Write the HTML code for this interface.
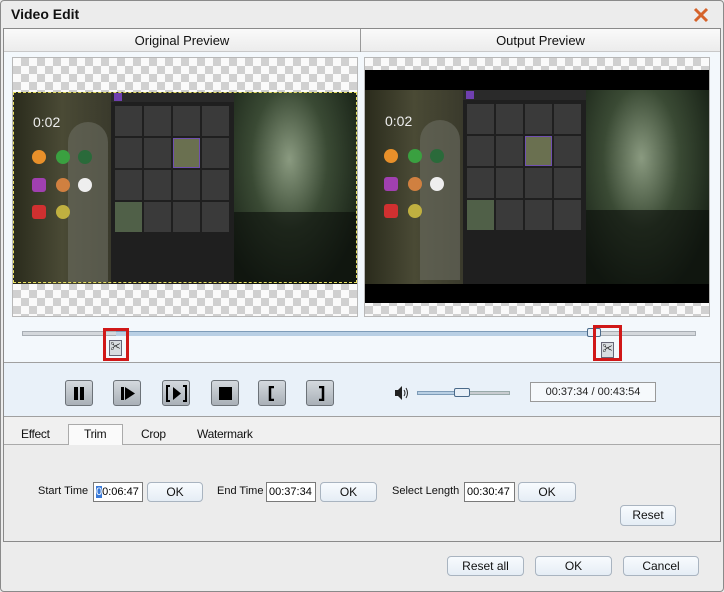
<!DOCTYPE html><html><head><style>
*{box-sizing:border-box;margin:0;padding:0}
body{width:724px;height:592px;position:relative;background:#ececec;font-family:"Liberation Sans","Noto Sans CJK SC",sans-serif;overflow:hidden}
.a{position:absolute}
.chk{background-color:#fafafa;background-image:linear-gradient(45deg,#d0d0d0 25%,transparent 25%,transparent 75%,#d0d0d0 75%),linear-gradient(45deg,#d0d0d0 25%,transparent 25%,transparent 75%,#d0d0d0 75%);background-size:16px 16px;background-position:0 0,8px 8px;border:1px solid #b8b8b8}
.vid{position:absolute;width:344px;height:192px;overflow:hidden;background:#1e1e1e}
.btn{position:absolute;width:28px;height:26px;border:1px solid #6c7278;border-radius:3px;background:linear-gradient(#d4d9de,#a9b0b7)}
.pb{position:absolute;height:20px;border:1px solid #a9b4c0;border-radius:4px;background:linear-gradient(#f8fbfe,#e5edf5);font-size:12px;text-align:center;line-height:18px;color:#111}
.tb{position:absolute;height:20px;border:1px solid #7a7a7a;background:#fff;font-size:11px;line-height:18px;padding-left:2px}
.lbl{position:absolute;font-size:11px;color:#111}
.tab{position:absolute;font-size:12px;color:#111;letter-spacing:-0.3px}
.cell{position:absolute;width:27px;height:30px;background:#3a3a3a}
.ic{position:absolute;width:14px;height:14px;border-radius:50%}
</style></head><body>
<div class="a" style="left:11px;top:6px;font-size:14px;font-weight:bold;color:#111">Video Edit</div>
<svg class="a" style="left:693px;top:7px" width="16" height="16"><path d="M2 2L14 14M14 2L2 14" stroke="#d5622a" stroke-width="3"/></svg>
<div class="a" style="left:3px;top:28px;width:718px;height:514px;border:1px solid #8a8a8a;background:#f3f8fc"></div>
<div class="a" style="left:4px;top:29px;width:716px;height:23px;background:linear-gradient(#fafafa,#ececec);border-bottom:1px solid #c8c8c8"></div>
<div class="a" style="left:360px;top:29px;width:1px;height:23px;background:#999"></div>
<div class="a" style="left:4px;top:33px;width:356px;text-align:center;font-size:13px;color:#111">Original Preview</div>
<div class="a" style="left:361px;top:33px;width:359px;text-align:center;font-size:13px;color:#111">Output Preview</div>
<div class="a chk" style="left:12px;top:57px;width:346px;height:260px"></div>
<div class="a chk" style="left:364px;top:57px;width:346px;height:260px"></div>
<div class="a" style="left:365px;top:70px;width:344px;height:233px;background:#000"></div>

<div class="vid" style="left:13px;top:92px">
 <div class="a" style="left:0;top:0;width:98px;height:192px;background:linear-gradient(90deg,#2a2b1c,#4a4a35 50%,#3a3a2c)"></div>
 <div class="a" style="left:55px;top:30px;width:40px;height:160px;background:#6a6c60;border-radius:20px 20px 0 0;opacity:.6"></div>
 <div class="a" style="left:20px;top:22px;color:#eee;font-size:14px">0:02</div>
 <div class="ic" style="left:19px;top:58px;background:#e8902a"></div><div class="ic" style="left:43px;top:58px;background:#3aa040"></div><div class="ic" style="left:65px;top:58px;background:#2a6a3a"></div>
 <div class="ic" style="left:19px;top:86px;background:#a040b0;border-radius:3px"></div><div class="ic" style="left:43px;top:86px;background:#d08040"></div><div class="ic" style="left:65px;top:86px;background:#eee"></div>
 <div class="ic" style="left:19px;top:113px;background:#d03030;border-radius:3px"></div><div class="ic" style="left:43px;top:113px;background:#c0b040"></div>
 <div class="a" style="left:98px;top:0;width:123px;height:192px;background:#1f1f1f"></div>
 <div class="a" style="left:98px;top:0;width:123px;height:10px;background:#2a2a2a"></div>
 <div class="a" style="left:101px;top:1px;width:8px;height:8px;background:#7040b0"></div>
 <div class="cell" style="left:102px;top:14px"></div><div class="cell" style="left:131px;top:14px"></div><div class="cell" style="left:160px;top:14px"></div><div class="cell" style="left:189px;top:14px"></div>
 <div class="cell" style="left:102px;top:46px"></div><div class="cell" style="left:131px;top:46px"></div><div class="cell" style="left:160px;top:46px;background:#6a7050;border:1px solid #7050b0"></div><div class="cell" style="left:189px;top:46px"></div>
 <div class="cell" style="left:102px;top:78px"></div><div class="cell" style="left:131px;top:78px"></div><div class="cell" style="left:160px;top:78px"></div><div class="cell" style="left:189px;top:78px"></div>
 <div class="cell" style="left:102px;top:110px;background:#506048"></div><div class="cell" style="left:131px;top:110px"></div><div class="cell" style="left:160px;top:110px"></div><div class="cell" style="left:189px;top:110px"></div>
 <div class="a" style="left:221px;top:0;width:123px;height:192px;background:radial-gradient(ellipse at 45% 35%,#8a9a80,#3a4a34 40%,#1a2418 80%)"></div>
 <div class="a" style="left:221px;top:120px;width:123px;height:72px;background:rgba(10,14,10,.6)"></div>
</div>
<div class="a" style="left:13px;top:92px;width:344px;height:191px;border:1px dashed #e8e060"></div>

<div class="vid" style="left:365px;top:90px;height:194px">
 <div class="a" style="left:0;top:0;width:98px;height:194px;background:linear-gradient(90deg,#2a2b1c,#4a4a35 50%,#3a3a2c)"></div>
 <div class="a" style="left:55px;top:30px;width:40px;height:160px;background:#6a6c60;border-radius:20px 20px 0 0;opacity:.6"></div>
 <div class="a" style="left:20px;top:23px;color:#eee;font-size:14px">0:02</div>
 <div class="ic" style="left:19px;top:59px;background:#e8902a"></div><div class="ic" style="left:43px;top:59px;background:#3aa040"></div><div class="ic" style="left:65px;top:59px;background:#2a6a3a"></div>
 <div class="ic" style="left:19px;top:87px;background:#a040b0;border-radius:3px"></div><div class="ic" style="left:43px;top:87px;background:#d08040"></div><div class="ic" style="left:65px;top:87px;background:#eee"></div>
 <div class="ic" style="left:19px;top:114px;background:#d03030;border-radius:3px"></div><div class="ic" style="left:43px;top:114px;background:#c0b040"></div>
 <div class="a" style="left:98px;top:0;width:123px;height:194px;background:#1f1f1f"></div>
 <div class="a" style="left:98px;top:0;width:123px;height:10px;background:#2a2a2a"></div>
 <div class="a" style="left:101px;top:1px;width:8px;height:8px;background:#7040b0"></div>
 <div class="cell" style="left:102px;top:14px"></div><div class="cell" style="left:131px;top:14px"></div><div class="cell" style="left:160px;top:14px"></div><div class="cell" style="left:189px;top:14px"></div>
 <div class="cell" style="left:102px;top:46px"></div><div class="cell" style="left:131px;top:46px"></div><div class="cell" style="left:160px;top:46px;background:#6a7050;border:1px solid #7050b0"></div><div class="cell" style="left:189px;top:46px"></div>
 <div class="cell" style="left:102px;top:78px"></div><div class="cell" style="left:131px;top:78px"></div><div class="cell" style="left:160px;top:78px"></div><div class="cell" style="left:189px;top:78px"></div>
 <div class="cell" style="left:102px;top:110px;background:#506048"></div><div class="cell" style="left:131px;top:110px"></div><div class="cell" style="left:160px;top:110px"></div><div class="cell" style="left:189px;top:110px"></div>
 <div class="a" style="left:221px;top:0;width:123px;height:194px;background:radial-gradient(ellipse at 45% 35%,#8a9a80,#3a4a34 40%,#1a2418 80%)"></div>
 <div class="a" style="left:221px;top:120px;width:123px;height:74px;background:rgba(10,14,10,.6)"></div>
</div>

<div class="a" style="left:22px;top:331px;width:674px;height:5px;background:#d4d8dc;border:1px solid #a8aeb4"></div>
<div class="a" style="left:116px;top:331px;width:478px;height:5px;background:#b8cfe4;border-top:1px solid #7e9cb8"></div>
<div class="a" style="left:587px;top:328px;width:14px;height:9px;border:1px solid #4a6a8a;border-radius:2px;background:#e8f0f8"></div>
<div class="a" style="left:103px;top:328px;width:26px;height:33px;border:3px solid #d01818"></div>
<div class="a" style="left:109px;top:340px;width:13px;height:16px;border:1px solid #667;background:#d8dce0;font-size:10px;line-height:14px;text-align:center">✂</div>
<div class="a" style="left:593px;top:325px;width:29px;height:36px;border:3px solid #d01818"></div>
<div class="a" style="left:601px;top:342px;width:13px;height:16px;border:1px solid #667;background:#d8dce0;font-size:10px;line-height:14px;text-align:center">✂</div>
<div class="a" style="left:4px;top:362px;width:716px;height:1px;background:#a0a0a0"></div>
<div class="a" style="left:4px;top:363px;width:716px;height:53px;background:#e9f1f9"></div>

<div class="btn" style="left:65px;top:380px"><div class="a" style="left:8px;top:6px;width:4px;height:13px;background:#000"></div><div class="a" style="left:14px;top:6px;width:4px;height:13px;background:#000"></div></div>
<div class="btn" style="left:113px;top:380px"><div class="a" style="left:7px;top:6px;width:3px;height:13px;background:#000"></div><svg class="a" style="left:11px;top:6px" width="10" height="13"><path d="M0 0L10 6.5L0 13Z"/></svg></div>
<div class="btn" style="left:162px;top:380px"><svg class="a" style="left:3px;top:4px" width="21" height="17"><path d="M4 1H1V16H4M17 1H20V16H17" stroke="#000" stroke-width="2" fill="none"/><path d="M7 2L15 8.5L7 15Z"/></svg></div>
<div class="btn" style="left:211px;top:380px"><div class="a" style="left:7px;top:6px;width:13px;height:13px;background:#000"></div></div>
<div class="btn" style="left:258px;top:380px"><svg class="a" style="left:9px;top:5px" width="8" height="15"><path d="M6 1H2V14H6" stroke="#000" stroke-width="2.5" fill="none"/></svg></div>
<div class="btn" style="left:306px;top:380px"><svg class="a" style="left:11px;top:5px" width="8" height="15"><path d="M1 1H5V14H1" stroke="#000" stroke-width="2.5" fill="none"/></svg></div>

<svg class="a" style="left:395px;top:386px" width="14" height="14"><path d="M0 4H3L7 0V14L3 10H0Z" fill="#222"/><path d="M9 4Q11 7 9 10M11 2Q14 7 11 12" stroke="#222" fill="none"/></svg>
<div class="a" style="left:417px;top:391px;width:93px;height:4px;background:#c8ccd0;border:1px solid #9aa"></div>
<div class="a" style="left:417px;top:391px;width:40px;height:4px;background:#b8cfe4;border:1px solid #7e9cb8"></div>
<div class="a" style="left:454px;top:388px;width:16px;height:9px;border:1px solid #4a6a8a;border-radius:2px;background:#e8f0f8"></div>
<div class="a" style="left:530px;top:382px;width:126px;height:20px;border:1px solid #999;background:#f6f9fc;font-size:11px;text-align:center;line-height:18px;color:#222">00:37:34 / 00:43:54</div>

<div class="a" style="left:4px;top:416px;width:716px;height:1px;background:#a0a0a0"></div>
<div class="a" style="left:4px;top:417px;width:716px;height:28px;background:#f0f0f0;border-bottom:1px solid #aaa"></div>
<div class="a" style="left:68px;top:424px;width:55px;height:22px;background:#fafafa;border:1px solid #aaa;border-bottom:none"></div>
<div class="tab" style="left:21px;top:427px">Effect</div>
<div class="tab" style="left:84px;top:427px">Trim</div>
<div class="tab" style="left:141px;top:427px">Crop</div>
<div class="tab" style="left:197px;top:427px">Watermark</div>
<div class="a" style="left:4px;top:445px;width:716px;height:96px;background:#ececec"></div>

<div class="lbl" style="left:38px;top:485px">Start Time</div>
<div class="tb" style="left:93px;top:482px;width:50px"><span style="background:#3a7ad8;color:#fff">0</span>0:06:47</div>
<div class="pb" style="left:147px;top:482px;width:56px">OK</div>
<div class="lbl" style="left:217px;top:485px">End Time</div>
<div class="tb" style="left:266px;top:482px;width:50px">00:37:34</div>
<div class="pb" style="left:320px;top:482px;width:57px">OK</div>
<div class="lbl" style="left:392px;top:485px">Select Length</div>
<div class="tb" style="left:464px;top:482px;width:51px">00:30:47</div>
<div class="pb" style="left:518px;top:482px;width:58px">OK</div>
<div class="pb" style="left:620px;top:505px;width:56px;height:21px">Reset</div>

<div class="pb" style="left:447px;top:556px;width:77px">Reset all</div>
<div class="pb" style="left:535px;top:556px;width:77px">OK</div>
<div class="pb" style="left:623px;top:556px;width:76px">Cancel</div>
<div class="a" style="left:0;top:0;width:724px;height:592px;border:1px solid #8a8a8a;border-radius:4px"></div>
</body></html>
